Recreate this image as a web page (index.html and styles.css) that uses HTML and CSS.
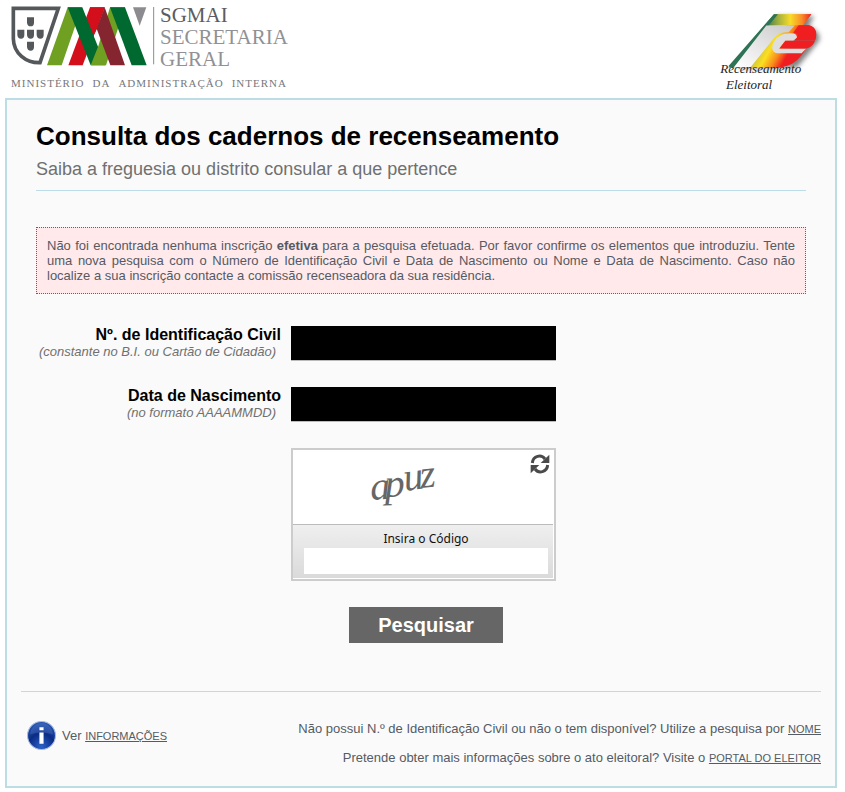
FILE: index.html
```html
<!DOCTYPE html>
<html lang="pt">
<head>
<meta charset="utf-8">
<title>Consulta dos cadernos de recenseamento</title>
<link rel="stylesheet" href="styles.css">
</head>
<body>
<header class="top">
  <div class="ministry">
    <div class="ministry-mark">
      <svg class="shield" viewBox="0 0 435 180" aria-hidden="true">
        <path d="M7 7H142L87 170C45 171 8 142 7 98Z" fill="#fff" stroke="#55585a" stroke-width="11"/>
        <path d="M48 34h21v16q0 11-10 11t-11-11zM48 71h21v16q0 11-10 11t-11-11zM48 107h21v16q0 11-10 11t-11-11zM19 71h21v16q0 11-10 11t-11-11zM77 71h21v16q0 11-10 11t-11-11z" fill="#55585a"/>
        <path d="M170 4H212L152 178H108Z" fill="#6fa022"/>
        <path d="M237 4H281L215 178H172Z" fill="#d20f1a"/>
        <path d="M170 4H214L283 178H239Z" fill="#00692f"/>
        <path d="M297 4H342L285 178H239L262 120Z" fill="#6fa022"/>
        <path d="M237 4H281L262 60L250 85L236 58Z" fill="#d20f1a"/>
        <path d="M281 4L342 178H298L257 68Z" fill="#85252f"/>
        <path d="M297 4H342L407 178H362Z" fill="#00692f"/>
        <path d="M366 4H406L386 59Z" fill="#8c8b90"/>
        <path d="M428 3V175" stroke="#8c8b90" stroke-width="3"/>
      </svg>
      <div class="ministry-name">
        <span class="dark">SGMAI</span>
        <span>SECRETARIA</span>
        <span>GERAL</span>
      </div>
    </div>
    <div class="ministry-line"><span>MINISTÉRIO</span> <span>DA</span> <span>ADMINISTRAÇÃO</span> <span>INTERNA</span></div>
  </div>
  <svg class="census" viewBox="0 0 435 290" role="img" aria-label="Recenseamento Eleitoral">
    <defs>
      <linearGradient id="flag" gradientUnits="userSpaceOnUse" x1="155" y1="105" x2="262" y2="165">
        <stop offset="0" stop-color="#2d7355"/><stop offset=".1" stop-color="#3f8058"/>
        <stop offset=".38" stop-color="#d9c93a"/><stop offset=".56" stop-color="#fbdf20"/>
        <stop offset=".8" stop-color="#f98a1c"/><stop offset="1" stop-color="#f01e20"/>
      </linearGradient>
      <linearGradient id="bar" x1="0" x2="1" y1="0" y2="0">
        <stop offset="0" stop-color="#2d7355"/><stop offset=".3" stop-color="#a4b13e"/>
        <stop offset=".55" stop-color="#f8db28"/><stop offset=".8" stop-color="#f88b28"/><stop offset="1" stop-color="#ee2020"/>
      </linearGradient>
      <linearGradient id="silver" x1="0" x2="1" y1="1" y2="0">
        <stop offset="0" stop-color="#fff"/><stop offset="1" stop-color="#c9c9ca"/>
      </linearGradient>
      <filter id="soft" x="-20%" y="-20%" width="150%" height="150%"><feGaussianBlur stdDeviation="8"/></filter>
    </defs>
    <path d="M232 48H342L325 80Q362 92 358 120L324 162L290 203H115Z" fill="#555" opacity=".75" filter="url(#soft)"/>
    <path d="M222 42H334L304 75H325C352 80 350 108 345 120H268L251 145H319L304 166Q282 196 240 202H85Z" fill="url(#flag)"/>
    <path d="M222 42H334L310 75H194Z" fill="url(#bar)"/>
    <path d="M222 42H234L103 198H85Z" fill="#2d7355"/>
    <path d="M199 76H284L265 97Q240 94 222 114L151 202H101Z" fill="url(#silver)"/>
    <path d="M296 75H326C354 80 351 109 345 121H285Q309 104 280 98Z" fill="#f01e20"/>
    <path d="M254 101Q291 94 291 112L280 122H256L238 145H319L304 160H238C202 163 215 110 254 101Z" fill="#dedede"/>
    <path d="M256 122H345Q338 141 319 145H238Z" fill="#f01e20"/>
    <path d="M238 160H305Q284 192 240 202H182Q206 178 217 150Q222 160 238 160Z" fill="url(#flag)"/>
    <text x="61" y="220">Recenseamento</text>
    <text x="78" y="267">Eleitoral</text>
  </svg>
</header>

<main class="panel">
  <div class="content">
    <h1>Consulta dos cadernos de recenseamento</h1>
    <p class="subtitle">Saiba a freguesia ou distrito consular a que pertence</p>
    <p class="alert" role="alert">Não foi encontrada nenhuma inscrição <strong>efetiva</strong> para a pesquisa efetuada. Por favor confirme os elementos que introduziu. Tente uma nova pesquisa com o Número de Identificação Civil e Data de Nascimento ou Nome e Data de Nascimento. Caso não localize a sua inscrição contacte a comissão recenseadora da sua residência.</p>
    <form class="search">
      <label for="civil">Nº. de Identificação Civil <small>(constante no B.I. ou Cartão de Cidadão)</small></label>
      <input class="field" id="civil" type="text">
      <label for="birth">Data de Nascimento <small>(no formato AAAAMMDD)</small></label>
      <input class="field" id="birth" type="text">
      <div class="captcha">
        <div class="challenge">
          <svg class="word" viewBox="0 0 80 66" role="img" aria-label="apuz">
            <text x="4 18 38 54" y="46 43 37 34" rotate="-4 -2 -8 -6">apuz</text>
          </svg>
          <button class="refresh" type="button" aria-label="Atualizar">
            <svg viewBox="0 0 60 60" aria-hidden="true">
              <g fill="none" stroke="#4a4a4a" stroke-width="9"><path d="M7 27C9 5 34 0 45 15"/><path d="M53 33C51 55 26 60 15 45"/></g>
              <path d="M58 2V27H32ZM2 58V33H28Z" fill="#4a4a4a"/>
            </svg>
          </button>
        </div>
        <div class="answer">
          <label for="code">Insira o Código</label>
          <input id="code" type="text">
        </div>
      </div>
      <button class="submit" type="submit">Pesquisar</button>
    </form>
  </div>
  <footer class="bottom">
    <div class="info">
      <svg viewBox="0 0 28 28" aria-hidden="true">
        <defs><radialGradient id="ball" cx=".5" cy=".9" r=".85"><stop offset="0" stop-color="#2a62c8"/><stop offset=".55" stop-color="#0b2c85"/><stop offset="1" stop-color="#2655b0"/></radialGradient></defs>
        <circle cx="14" cy="14" r="13.5" fill="url(#ball)" stroke="#a9bbdf"/>
        <path d="M3 13A11 11 0 0 1 25 13Q14 9 3 13Z" fill="#7597dc" opacity=".25"/>
        <path d="M12 6h4v3h-4zM12 11h4v11h-4z" fill="#fff"/>
      </svg>
      <span>Ver <a href="#">INFORMAÇÕES</a></span>
    </div>
    <div class="links">
      <p>Não possui N.º de Identificação Civil ou não o tem disponível? Utilize a pesquisa por <a href="#">NOME</a></p>
      <p>Pretende obter mais informações sobre o ato eleitoral? Visite o <a href="#">PORTAL DO ELEITOR</a></p>
    </div>
  </footer>
</main>
</body>
</html>
```
FILE: styles.css
```css
* { box-sizing: border-box; }

body {
  margin: 0;
  padding: 0 8px 4px 5px;
  background: #fff;
  color: #555a63;
  font: 13px/15px "Liberation Sans", Arial, sans-serif;
}

h1, p { margin: 0; }

.top {
  display: flex;
  justify-content: space-between;
  height: 98px;
  padding: 6px 0 0 6px;
}

.ministry {
  width: 276px;
  color: #77777b;
  font-family: "Liberation Serif", "Times New Roman", serif;
}

.ministry-mark { display: flex; gap: 4px; }

.shield { flex: none; width: 145px; height: 60px; }

.ministry-name {
  display: flex;
  flex-direction: column;
  color: #919195;
  font-size: 21px;
  line-height: 22px;
  margin-top: -2px;
}

.ministry-name .dark { color: #5c5c60; }

.ministry-line {
  display: flex;
  justify-content: space-between;
  margin-top: 6px;
  font-size: 11px;
  line-height: 14px;
  letter-spacing: 1px;
}

.census {
  width: 145px;
  height: 97px;
  margin: -6px -8px 0 0;
}

.census text {
  fill: #222;
  font: italic 39px "Liberation Serif", "Times New Roman", serif;
}

.panel {
  padding: 20px 14px 20px;
  border: 2px solid #bcdde4;
  background: #fafafa;
}

.content { padding: 0 15px; }

h1 {
  color: #000;
  font-size: 26px;
  line-height: 32px;
}

.subtitle {
  padding: 6px 0 10px;
  border-bottom: 1px solid #bcdde8;
  color: #707070;
  font-size: 18px;
  line-height: 22px;
}

.alert {
  margin-top: 36px;
  padding: 10px;
  border: 1px dotted #d0304c;
  background: #ffe9eb;
  text-align: justify;
}

.search {
  display: grid;
  grid-template-columns: 245px 265px;
  column-gap: 10px;
  row-gap: 26px;
  margin-top: 32px;
}

.search > label {
  color: #000;
  font-size: 16px;
  font-weight: bold;
  line-height: 18px;
  text-align: right;
}

.search small {
  display: block;
  padding-right: 5px;
  color: #707070;
  font-size: 13px;
  font-style: italic;
  font-weight: normal;
  line-height: 16px;
}

.field {
  width: 100%;
  height: 35px;
  border: 0;
  border-bottom: 1px solid #bbb;
  background: #000;
  color: #000;
}

.captcha {
  grid-column: 2;
  border: 2px solid #ccc;
  background: #fff;
}

.challenge {
  display: flex;
  justify-content: space-between;
  height: 74px;
  padding: 4px 4px 0 74px;
}

.word { width: 80px; height: 66px; overflow: visible; }

.word text {
  fill: #666;
  font: italic 40px "Liberation Serif", "Times New Roman", serif;
}

.refresh {
  width: 20px;
  height: 20px;
  padding: 0;
  border: 0;
  background: none;
}

.refresh svg { display: block; width: 20px; height: 20px; }

.answer {
  margin: 0 1px 1px 0;
  padding: 5px 5px 4px 11px;
  border-top: 1px solid #bbb;
  background: linear-gradient(#efefef, #dadada);
  color: #111;
  text-align: center;
}

.answer label {
  display: block;
  font: 12px/18px "Noto Sans", Tahoma, sans-serif;
}

.answer input {
  display: block;
  width: 100%;
  height: 26px;
  border: 0;
  background: #fff;
}

.submit {
  grid-column: 2;
  justify-self: center;
  width: 154px;
  height: 36px;
  margin-left: 5px;
  padding: 0;
  border: 0;
  background: #666;
  color: #fff;
  font: bold 20px/36px "Liberation Sans", Arial, sans-serif;
}

.bottom {
  display: flex;
  justify-content: space-between;
  align-items: flex-start;
  margin-top: 48px;
  padding: 29px 0 0 6px;
  border-top: 1px solid #bcdde8;
}

.info { display: flex; align-items: center; gap: 6px; }

.info svg { width: 29px; height: 29px; }

.links {
  display: flex;
  flex-direction: column;
  gap: 13px;
  text-align: right;
}

.bottom a { color: inherit; font-size: 11px; }
```
